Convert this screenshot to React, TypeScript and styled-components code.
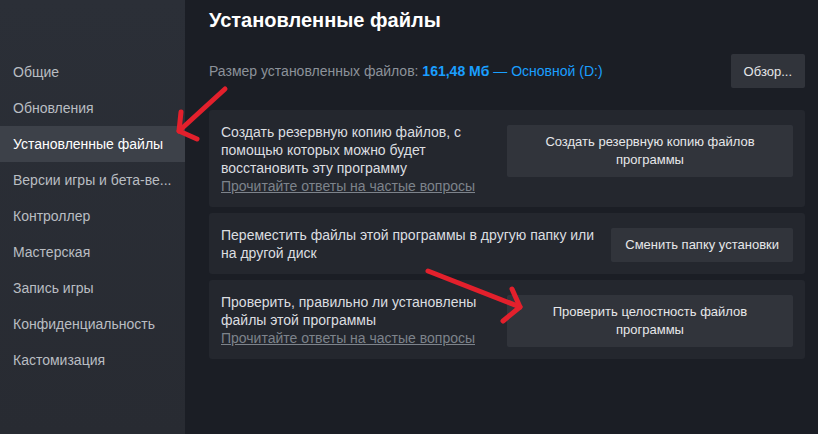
import styled, { createGlobalStyle } from "styled-components"

const GlobalStyle = createGlobalStyle`
    html, body {
        margin: 0;
        padding: 0;
        background: #1b1e25;
    }
    body {
        font-family: "Liberation Sans", Arial, sans-serif;
    }
`

const menu = [
    "Общие",
    "Обновления",
    "Установленные файлы",
    "Версии игры и бета-ве...",
    "Контроллер",
    "Мастерская",
    "Запись игры",
    "Конфиденциальность",
    "Кастомизация"
]

type Action = {
    text: string
    button: string
    faq?: boolean
    wide?: boolean
}

const actions: Action[] = [
    {
        text: "Создать резервную копию файлов, с помощью которых можно будет восстановить эту программу",
        button: "Создать резервную копию файлов программы",
        faq: true,
        wide: true
    },
    {
        text: "Переместить файлы этой программы в другую папку или на другой диск",
        button: "Сменить папку установки"
    },
    {
        text: "Проверить, правильно ли установлены файлы этой программы",
        button: "Проверить целостность файлов программы",
        faq: true,
        wide: true
    }
]

type Pt = [number, number]

// hand-drawn red marker arrow: a shaft and two wings meeting at the tip
function Arrow({ from, tip, wings }: { from: Pt; tip: Pt; wings: [Pt, Pt] }) {
    const [w1, w2] = wings
    return (
        <g stroke="#e3202c" strokeWidth={5} strokeLinecap="round" strokeLinejoin="round" fill="none">
            <line x1={from[0]} y1={from[1]} x2={tip[0]} y2={tip[1]} />
            <polyline points={`${w1[0]},${w1[1]} ${tip[0]},${tip[1]} ${w2[0]},${w2[1]}`} />
        </g>
    )
}

export default function App() {
    return (
        <Page>
            <GlobalStyle />
            <Sidebar>
                {menu.map((item, i) => (
                    <MenuItem key={item} $active={i === 2}>
                        {item}
                    </MenuItem>
                ))}
            </Sidebar>

            <Main>
                <Title>Установленные файлы</Title>
                <SizeRow>
                    <SizeText>
                        Размер установленных файлов: <Value>161,48 Мб</Value>{" "}
                        <Drive>— Основной (D:)</Drive>
                    </SizeText>
                    <SmallButton>Обзор...</SmallButton>
                </SizeRow>

                <Cards>
                    {actions.map((a) => (
                        <Card key={a.button}>
                            <CardText>
                                {a.text}
                                {a.faq && <Faq>Прочитайте ответы на частые вопросы</Faq>}
                            </CardText>
                            <ActionButton $wide={a.wide}>{a.button}</ActionButton>
                        </Card>
                    ))}
                </Cards>
            </Main>

            <Overlay width="818" height="434" viewBox="0 0 818 434">
                <Arrow from={[225, 89]} tip={[179, 131]} wings={[[181, 112], [197, 139]]} />
                <Arrow from={[428, 271]} tip={[520, 307]} wings={[[512, 289], [503, 321]]} />
            </Overlay>
        </Page>
    )
}

const Page = styled.div`
    position: relative;
    display: flex;
    width: 818px;
    height: 434px;
    overflow: hidden;
    background: #1b1e25;
`

const Sidebar = styled.nav`
    width: 185px;
    flex-shrink: 0;
    display: flex;
    flex-direction: column;
    padding-top: 54px;
    background: linear-gradient(180deg, #2b2f37 0%, #282b32 100%);
`

const MenuItem = styled.div<{ $active?: boolean }>`
    height: 36px;
    display: flex;
    align-items: center;
    padding-left: 13px;
    font-size: 14px;
    white-space: nowrap;
    color: ${({ $active }) => ($active ? "#ffffff" : "#b9bdc2")};
    background: ${({ $active }) => ($active ? "#3d4149" : "transparent")};
`

const Main = styled.main`
    flex: 1;
    display: flex;
    flex-direction: column;
    padding: 8px 13px 0 24px;
`

const Title = styled.h1`
    margin: 0;
    font-size: 20px;
    line-height: 24px;
    font-weight: 700;
    color: #ffffff;
`

const SizeRow = styled.div`
    display: flex;
    align-items: center;
    justify-content: space-between;
    margin-top: 22px;
    height: 34px;
`

const SizeText = styled.div`
    font-size: 14px;
    color: #8c929a;
`

const Value = styled.span`
    color: #1a9fff;
    font-weight: 700;
`

const Drive = styled.span`
    color: #1a9fff;
`

const SmallButton = styled.button`
    height: 34px;
    padding: 0 13px;
    border: none;
    border-radius: 2px;
    background: #31343b;
    color: #e6e7e9;
    font-family: inherit;
    font-size: 13px;
`

const Cards = styled.div`
    display: flex;
    flex-direction: column;
    gap: 6px;
    margin-top: 22px;
`

const Card = styled.div`
    display: flex;
    align-items: flex-start;
    gap: 16px;
    padding: 13px 12px 12px;
    border-radius: 3px;
    background: #24272e;
`

const CardText = styled.div`
    flex: 1;
    display: flex;
    flex-direction: column;
    font-size: 14px;
    line-height: 18px;
    color: #dcdee0;
`

const Faq = styled.a`
    color: #7d838b;
    text-decoration: underline;
`

const ActionButton = styled.button<{ $wide?: boolean }>`
    flex-shrink: 0;
    width: ${({ $wide }) => ($wide ? "286px" : "auto")};
    margin-top: 2px;
    padding: 8px ${({ $wide }) => ($wide ? "28px" : "14px")};
    border: none;
    border-radius: 2px;
    background: #31343b;
    color: #e6e7e9;
    font-family: inherit;
    font-size: 13px;
    line-height: 18px;
    text-align: center;
`

const Overlay = styled.svg`
    position: absolute;
    inset: 0;
    pointer-events: none;
`
